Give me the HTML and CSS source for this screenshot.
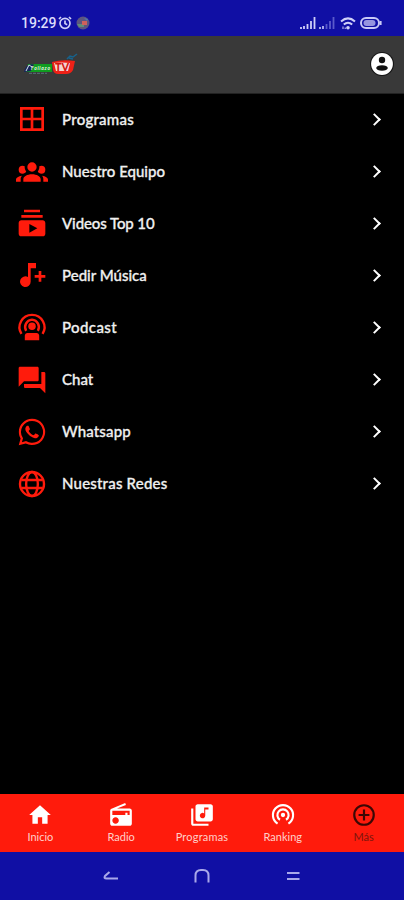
FILE: index.html
```html
<!DOCTYPE html>
<html lang="es">
<head>
  <meta charset="UTF-8" />
  <meta name="viewport" content="width=device-width, initial-scale=1.0"/>
  <title>Radio TV</title>
  <link rel="stylesheet" href="styles.css">
</head>
<body>

<div class="status-bar">
  <span class="time">19:29</span>
  <svg class="alarm" viewBox="0 0 14 14"><circle cx="7" cy="7.3" r="5" /><path d="M7 4.5v3l2.2 1.2M1 3l2-2M13 3l-2-2" /></svg>
  <svg class="app-dot" viewBox="0 0 14 14"><circle cx="7" cy="7" r="6.5" fill="#5c5580"/><path d="M1 8h7v3H3z" fill="#5f8f78"/><path d="M6 5h5v4H6z" fill="#d0605c"/><path d="M8 2l4 1-1 2z" fill="#4c78b0"/></svg>
  <div class="status-right">
    <svg class="signal" viewBox="0 0 16 12"><path d="M1 12v-2M4 12V9M7.5 12V7M11 12V4M14.5 12V0" /></svg>
    <svg class="signal weak" viewBox="0 0 16 12"><path d="M1 12v-2M4 12V9" stroke="#b9baf0"/><path d="M7.5 12V7M11 12V4M14.5 12V0" /></svg>
    <svg class="wifi" viewBox="0 0 16 13"><path d="M1 4.5Q8-1.7 15 4.5M3.8 7.6Q8 4 12.2 7.6" /><circle cx="8" cy="10.7" r="1.8"/><path d="M3 9.5V12M5.2 12v-1.5" stroke-width="1"/></svg>
    <svg class="battery" viewBox="0 0 22 12"><rect x="1" y="1" width="18" height="10" rx="5"/><rect class="level" x="3.5" y="3" width="12" height="6" rx="3"/><path d="M20.6 4v4"/></svg>
  </div>
</div>

<header>
  <svg class="logo" viewBox="0 0 56 24">
    <path d="M5 11h24v8H3z" fill="#109c20"/>
    <path d="M1 19Q3 10 11 11.500L8 18z" fill="#17245c"/>
    <path d="M3 18l3-6 3 2" fill="none" stroke="#d6e8e8" stroke-width="1"/>
    <text x="8" y="16.500" class="logo-name" textLength="19">Follazo</text>
    <path d="M6 20.300h18" stroke="#59717c" stroke-width="1" stroke-dasharray="3 1"/>
    <path d="M29 9Q39 6 52 8L50 17Q48 21 43 21H35Q31 21 30 17z" fill="#ee2117"/>
    <path d="M31 10Q39 9 47 10L45 18H33z" fill="#f4d5d1"/>
    <text x="32" y="18" class="logo-tv" textLength="14" lengthAdjust="spacingAndGlyphs">TV</text>
    <path d="M44 6l3-3 3 1 4-3M46 5l4 1" fill="none" stroke="#17628c" stroke-width="1.5"/>
  </svg>
  <svg class="account" viewBox="0 0 26 26">
    <circle cx="13" cy="13" r="12" fill="#151515"/>
    <circle cx="13" cy="13" r="10.9" fill="#fff"/>
    <circle cx="13" cy="9" r="3.2" fill="#111"/>
    <ellipse cx="13" cy="17" rx="5.8" ry="2.8" fill="#111"/>
  </svg>
</header>

<main class="menu">
  <a class="item">
    <svg viewBox="0 0 24 24"><path d="M3 3v18h18V3H3zm8 16H5v-6h6v6zm0-8H5V5h6v6zm8 8h-6v-6h6v6zm0-8h-6V5h6v6z"/></svg>
    <span class="w-programas">Programas</span>
    <i class="arrow"></i>
  </a>
  <a class="item">
    <svg viewBox="0 0 24 24"><path d="M12 5.5a3.5 3.5 0 1 1 0 7 3.5 3.5 0 0 1 0-7M5 8c.56 0 1.08.15 1.53.42-.15 1.43.27 2.85 1.13 3.96C7.16 13.34 6.16 14 5 14a3 3 0 0 1 0-6m14 0a3 3 0 0 1 0 6c-1.16 0-2.16-.66-2.66-1.62.86-1.11 1.28-2.53 1.13-3.96.45-.27.97-.42 1.53-.42M5.5 18.25c0-2.07 2.91-3.75 6.5-3.75s6.5 1.68 6.5 3.75V20h-13v-1.75M0 20v-1.5c0-1.39 1.89-2.56 4.45-2.9-.59.68-.95 1.62-.95 2.65V20H0m24 0h-3.5v-1.75c0-1.03-.36-1.97-.95-2.65 2.56.34 4.45 1.51 4.45 2.9V20z"/></svg>
    <span>Nuestro Equipo</span>
    <i class="arrow"></i>
  </a>
  <a class="item">
    <svg viewBox="0 0 24 24"><path d="M20 8H4V6h16v2zm-2-6H6v2h12V2zm4 10v8c0 1.1-.9 2-2 2H4c-1.1 0-2-.9-2-2v-8c0-1.1.9-2 2-2h16c1.1 0 2 .9 2 2zm-6 4l-6-3.27v6.53L16 16z"/></svg>
    <span class="w-videos">Videos Top 10</span>
    <i class="arrow"></i>
  </a>
  <a class="item">
    <svg viewBox="0 0 24 24"><path d="M9 3v10.55A4 4 0 1 0 11 17V7h4V3H9m8 6v3h-3v2h3v3h2v-3h3v-2h-3V9h-2z"/></svg>
    <span>Pedir Música</span>
    <i class="arrow"></i>
  </a>
  <a class="item">
    <svg viewBox="0 0 24 24"><circle cx="12" cy="11.5" r="2.8"/><path d="M6.6 22v-3.5c0-1.1.9-2 2-2h6.8c1.1 0 2 .9 2 2V22z"/><path class="line" d="M4.100 17.200A9.300 9.300 0 0 1 12 2.900a9.300 9.300 0 0 1 7.900 14.300M7.600 14.900A5.600 5.600 0 0 1 12 6.500a5.600 5.600 0 0 1 4.400 8.400"/></svg>
    <span class="w-podcast">Podcast</span>
    <i class="arrow"></i>
  </a>
  <a class="item">
    <svg viewBox="0 0 24 24"><path d="M21 6h-2v9H6v2c0 .55.45 1 1 1h11l4 4V7c0-.55-.45-1-1-1zm-4 6V3c0-.55-.45-1-1-1H3c-.55 0-1 .45-1 1v14l4-4h10c.55 0 1-.45 1-1z"/></svg>
    <span>Chat</span>
    <i class="arrow"></i>
  </a>
  <a class="item">
    <svg viewBox="0 0 24 24"><path d="M12.04 2c-5.46 0-9.91 4.45-9.91 9.91 0 1.75.46 3.45 1.32 4.95L2.05 22l5.25-1.38A9.9 9.9 0 1 0 12.04 2m0 1.67a8.24 8.24 0 1 1-4.19 15.33l-.3-.17-3.12.82.83-3.04-.2-.32A8.24 8.24 0 0 1 12.04 3.67M8.53 7.33c-.16 0-.43.06-.66.31C7.65 7.89 7 8.5 7 9.71c0 1.22.89 2.39 1 2.56.14.17 1.76 2.67 4.25 3.73.59.27 1.05.42 1.41.53.59.19 1.13.16 1.56.1.48-.07 1.46-.6 1.67-1.18.21-.58.21-1.07.15-1.18-.07-.1-.23-.16-.48-.27-.25-.14-1.47-.74-1.69-.82-.23-.08-.37-.12-.56.12-.16.25-.64.81-.78.97-.15.17-.29.19-.53.07-.26-.13-1.06-.39-2-1.23-.74-.66-1.23-1.47-1.38-1.72-.12-.24-.01-.39.11-.5.11-.11.27-.29.37-.44.13-.14.17-.25.25-.41.08-.17.04-.31-.02-.43-.06-.11-.56-1.35-.77-1.84-.2-.48-.4-.42-.56-.43z"/></svg>
    <span class="w-whatsapp">Whatsapp</span>
    <i class="arrow"></i>
  </a>
  <a class="item">
    <svg viewBox="0 0 24 24"><g class="line"><circle cx="12" cy="12" r="9"/><ellipse cx="12" cy="12" rx="4.4" ry="9"/><path d="M4 9h16M4 15h16"/></g></svg>
    <span class="w-redes">Nuestras Redes</span>
    <i class="arrow"></i>
  </a>
</main>

<nav class="tabs">
  <a>
    <svg viewBox="0 0 24 24"><path d="M10 20v-6h4v6h5v-8h3L12 3 2 12h3v8z"/></svg>
    <span>Inicio</span>
  </a>
  <a>
    <svg viewBox="0 0 24 24"><path d="M3.24 6.15C2.51 6.43 2 7.17 2 8v12c0 1.1.89 2 2 2h16c1.11 0 2-.9 2-2V8c0-1.11-.89-2-2-2H8.3l8.26-3.34L15.88 1 3.24 6.15zM7 20c-1.66 0-3-1.34-3-3s1.34-3 3-3 3 1.34 3 3-1.34 3-3 3zm13-8h-2v-2h-2v2H4V8h16v4z"/></svg>
    <span>Radio</span>
  </a>
  <a>
    <svg viewBox="0 0 24 24"><path d="M20 2H8c-1.1 0-2 .9-2 2v12c0 1.1.9 2 2 2h12c1.1 0 2-.9 2-2V4c0-1.1-.9-2-2-2zm-2 5h-3v5.5a2.5 2.5 0 1 1-1-1.99V5h4v2zM4 6H2v14c0 1.1.9 2 2 2h14v-2H4V6z"/></svg>
    <span class="t-wide">Programas</span>
  </a>
  <a>
    <svg viewBox="0 0 24 24"><circle cx="12" cy="12" r="2"/><path class="line" d="M7 20a9.300 9.300 0 1 1 10 0M9.200 16.400a5.200 5.200 0 1 1 5.600 0"/></svg>
    <span>Ranking</span>
  </a>
  <a class="active">
    <svg viewBox="0 0 24 24"><g class="line"><circle cx="12" cy="12" r="9"/><path d="M12 7v10M7 12h10"/></g></svg>
    <span>Más</span>
  </a>
</nav>

<div class="system-nav">
  <svg viewBox="0 0 20 20"><path d="M8.5 6L4 10q-1.500 2.500 1.500 2.500H17"/></svg>
  <svg viewBox="0 0 20 20"><path d="M3.5 16.5v-7Q3.5 4 9 4h2q5.500 0 5.500 5.500v7"/></svg>
  <svg viewBox="0 0 20 20"><path d="M4 7h12.500M4 13h12.500"/></svg>
</div>

</body>
</html>
```
FILE: styles.css
```css
* { margin: 0; padding: 0; box-sizing: border-box; }
body {
  font-family: Lato, 'Open Sans', sans-serif;
  background: #000;
  color: #fff;
  height: 100vh;
  overflow: hidden;
  display: flex;
  flex-direction: column;
}
svg { display: block; flex: none; }

/* Phone status bar */
.status-bar {
  height: 36px;
  background: #100fa4;
  display: flex;
  align-items: center;
  padding: 10px 22px 0 21px;
}
.time {
  font: 500 14px Roboto, sans-serif;
  color: #dcdcfb;
  width: 37px;
}
.alarm { width: 14px; height: 14px; fill: none; stroke: #d0d1f8; stroke-width: 1.7; }
.app-dot { width: 14px; height: 14px; margin-left: 4px; }
.status-right {
  margin-left: auto;
  display: flex;
  align-items: center;
}
.signal { width: 16px; height: 12px; margin-right: 3px; stroke: #cfcff8; stroke-width: 1.8; }
.signal.weak { stroke: #5b5bcb; margin-right: 5px; }
.wifi { width: 16px; height: 13px; fill: #d0d1f8; stroke: #d0d1f8; stroke-width: 2; margin-right: 4px; }
.wifi path { fill: none; }
.wifi circle { stroke: none; }
.battery { width: 22px; height: 12px; fill: none; stroke: #c9c9f6; stroke-width: 2; }
.battery .level { fill: #9695df; stroke: none; }

header {
  height: 58px;
  background: #393939;
  border-bottom: 1px solid #222;
  display: flex;
  align-items: center;
  justify-content: space-between;
  padding: 0 9px 0 23px;
}
.logo { width: 56px; height: 24px; }
.logo-name { font: italic bold 5px Lato, sans-serif; fill: #e8f5e8; }
.logo-tv { font: 900 11px Lato, sans-serif; fill: #d5150f; }
.account { width: 26px; height: 26px; margin-bottom: 1px; }

/* Menu */
.menu { flex: 1; margin-top: -1px; }
.item {
  height: 52.1px;
  display: flex;
  align-items: center;
  padding: 0 22px 0 15.5px;
}
.item svg { width: 32px; height: 32px; fill: #ff1b0c; }
.item .line { fill: none; stroke: #ff1b0c; stroke-width: 1.8; }
.item span {
  flex: 1;
  margin: -1px 0 0 14.5px;
  font-size: 15px;
  font-weight: 500;
  color: #f0f0f0;
  -webkit-text-stroke: 0.3px #f0f0f0;
}
.item .w-programas { letter-spacing: 0.25px; }
.item .w-videos { letter-spacing: -0.1px; }
.item .w-podcast { letter-spacing: 0.4px; }
.item .w-whatsapp { letter-spacing: 0.15px; }
.item .w-redes { letter-spacing: 0.2px; }
.arrow {
  width: 9px;
  height: 9px;
  border: solid #fff;
  border-width: 2.6px 2.6px 0 0;
  transform: rotate(45deg);
  margin-right: 3px;
}

/* Bottom tabs */
.tabs {
  height: 58px;
  background: #ff1b0c;
  display: grid;
  grid-template-columns: repeat(5, 1fr);
}
.tabs a {
  display: flex;
  flex-direction: column;
  align-items: center;
  padding-top: 8px;
  color: #ffd0ca;
}
.tabs svg { width: 26px; height: 26px; fill: #fff; }
.tabs .line { fill: none; stroke: #fff; stroke-width: 2; }
.tabs span { font-size: 11px; line-height: 14px; margin-top: 2px; }
.tabs .t-wide { letter-spacing: 0.2px; }
.tabs .active { color: #7c160d; }
.tabs .active .line { stroke: #3b0805; }

.system-nav {
  height: 48px;
  background: #100fa4;
  display: flex;
  align-items: center;
  justify-content: center;
  gap: 71px;
}
.system-nav svg { width: 20px; height: 20px; fill: none; stroke: #a9a8ea; stroke-width: 2; }
```
